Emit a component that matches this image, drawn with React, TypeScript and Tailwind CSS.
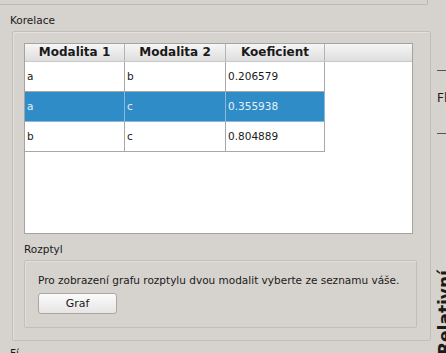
import React from 'react';

const rows = [
  { a: 'a', b: 'b', k: '0.206579', sel: false },
  { a: 'a', b: 'c', k: '0.355938', sel: true },
  { a: 'b', b: 'c', k: '0.804889', sel: false },
];

function App() {
  return (
    <div
      className="w-[446px] h-[353px] overflow-hidden flex bg-[#d6d2ce] text-[#1a1a1a] text-[10.5px]"
      style={{ fontFamily: '"DejaVu Sans", "Noto Sans", sans-serif' }}
    >
      {/* Left column */}
      <div className="w-[431px] shrink-0 flex flex-col overflow-hidden">
        {/* Top panel remainder */}
        <div className="w-[428px] h-[5px] shrink-0 border-r border-b border-[#bcb8b4] rounded-br-[2px]" />

        <div className="pl-[10px] mt-[8px] leading-[14px] shrink-0">Korelace</div>

        {/* Korelace group */}
        <div className="ml-[12px] mt-[4px] w-[419px] h-[310px] shrink-0 border border-[#c2beba] rounded-[2px] shadow-[inset_1px_1px_0_#e2dfdc] pl-[11px] pt-[11px] flex flex-col">
          {/* Table */}
          <div className="w-[389px] h-[191px] shrink-0 border border-[#a3a3a3] bg-white flex flex-col">
            <div className="flex h-[18px] shrink-0 bg-gradient-to-b from-[#f6f6f6] to-[#dedede] border-b border-[#c8c8c8] font-bold text-[12px] leading-[17px]">
              <div className="w-[100px] text-center border-r border-[#b4b4b4]">Modalita 1</div>
              <div className="w-[101px] text-center border-r border-[#b4b4b4]">Modalita 2</div>
              <div className="w-[99px] text-center border-r border-[#b4b4b4]">Koeficient</div>
              <div className="flex-1" />
            </div>
            {rows.map((r, i) => (
              <div key={i} className="flex h-[30px] shrink-0 leading-[29px]">
                <div
                  className={`w-[300px] flex ${
                    r.sel ? 'bg-[#308cc6] text-[#e4f1fb]' : 'bg-white text-[#1a1a1a]'
                  }`}
                >
                  <div className={`w-[100px] pl-[2px] border-r border-b ${r.sel ? 'border-[#8ab8d8]' : 'border-[#a8a8a8]'}`}>{r.a}</div>
                  <div className={`w-[101px] pl-[2px] border-r border-b ${r.sel ? 'border-[#8ab8d8]' : 'border-[#a8a8a8]'}`}>{r.b}</div>
                  <div className={`w-[99px] pl-[2px] border-r border-b ${r.sel ? 'border-[#8ab8d8]' : 'border-[#a8a8a8]'}`}>{r.k}</div>
                </div>
              </div>
            ))}
          </div>

          <div className="mt-[8px] leading-[14px] shrink-0">Rozptyl</div>

          {/* Rozptyl group */}
          <div className="mt-[4px] w-[393px] h-[68px] shrink-0 border border-[#c2beba] rounded-[2px] shadow-[inset_1px_1px_0_#e2dfdc] pl-[13px] pt-[12px] flex flex-col">
            <div className="leading-[14px] whitespace-nowrap">Pro zobrazení grafu rozptylu dvou modalit vyberte ze seznamu váše.</div>
            <button className="mt-[6px] w-[79px] h-[21px] rounded-[3px] border border-[#a9a6a3] bg-gradient-to-b from-[#fbfbfb] to-[#e6e5e4] text-[11px] leading-[19px] text-center text-[#1a1a1a]">
              Graf
            </button>
          </div>
        </div>

        <div className="pl-[10px] mt-[5px] leading-[14px] shrink-0">Fí</div>
      </div>

      {/* Right column (clipped) */}
      <div className="flex-1 flex flex-col pl-[6px] overflow-hidden">
        <div className="mt-[70px] h-px w-[20px] shrink-0 bg-[#555]" />
        <div className="mt-[21px] text-[12px] leading-[13px] whitespace-nowrap shrink-0">Fl</div>
        <div className="mt-[28px] h-px w-[20px] shrink-0 bg-[#555]" />
        <div className="mt-auto mb-[-2px] h-[86px] w-[12px] shrink-0 relative">
          <div className="absolute left-[0px] top-0 whitespace-nowrap font-bold text-[17px] leading-[17px] origin-top-left -rotate-90 translate-y-[86px]">
            Relativní
          </div>
        </div>
      </div>
    </div>
  );
}

export default App;
